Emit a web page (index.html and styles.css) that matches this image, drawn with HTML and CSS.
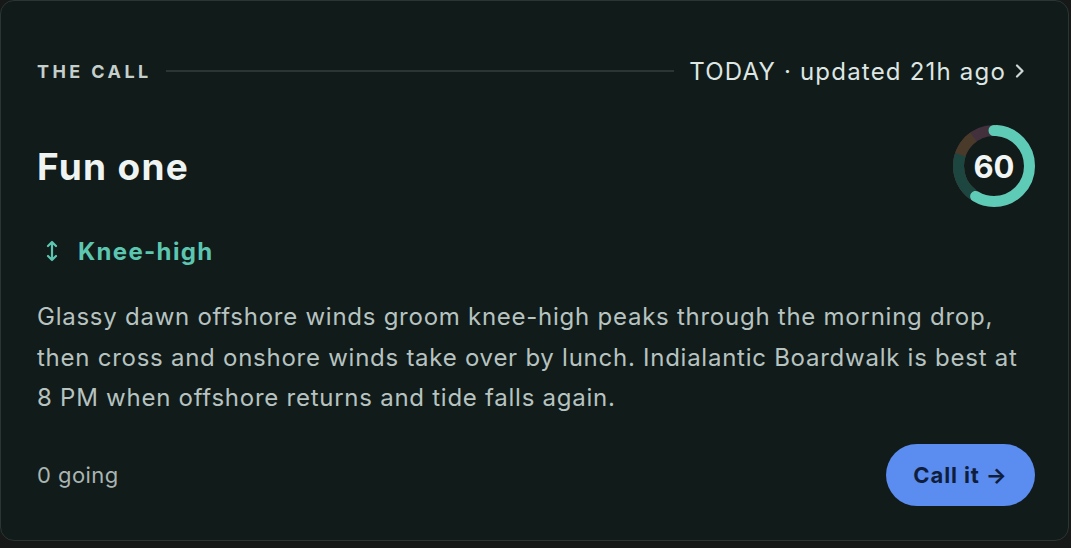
FILE: index.html
```html
<!DOCTYPE html>
<html>
<head>
<meta charset="utf-8">
<link rel="stylesheet" href="styles.css">
</head>
<body>
<div class="card">
  <div class="head">
    <span class="label">THE CALL</span>
    <span class="rule"></span>
    <span class="when">TODAY · updated 21h ago</span>
    <svg class="chev" width="12" height="16" viewBox="0 0 12 16"><path d="M3 2.5 L8.5 8 L3 13.5" fill="none" stroke="#cdd7d4" stroke-width="2.2" stroke-linecap="round" stroke-linejoin="round"/></svg>
  </div>
  <div class="titlerow">
    <h1 class="title">Fun one</h1>
    <div class="ring">
      <svg width="82" height="82" viewBox="0 0 82 82">
        <g transform="rotate(-90 41 41)" fill="none" stroke-width="11">
          <circle cx="41" cy="41" r="35.5" stroke="#43303d" stroke-dasharray="223.05 223.05"/>
          <circle cx="41" cy="41" r="35.5" stroke="#4a3a2a" stroke-dasharray="0 133.8 67 100"/>
          <circle cx="41" cy="41" r="35.5" stroke="#1d4640" stroke-dasharray="0 133.8 44.6 100"/>
          <circle cx="41" cy="41" r="35.5" stroke="#5ecbb6" stroke-linecap="round" stroke-dasharray="0.1 2.5 128 200"/>
        </g>
      </svg>
      <span class="score">60</span>
    </div>
  </div>
  <div class="height">
    <svg class="updown" width="12" height="24" viewBox="0 0 12 24"><path d="M6 3 V21 M2 7 L6 3 L10 7 M2 17 L6 21 L10 17" fill="none" stroke="#5cc6b0" stroke-width="2.2" stroke-linecap="round" stroke-linejoin="round"/></svg>
    <span>Knee-high</span>
  </div>
  <p class="desc">Glassy dawn offshore winds groom knee-high peaks through the morning drop, then cross and onshore winds take over by lunch. Indialantic Boardwalk is best at 8 PM when offshore returns and tide falls again.</p>
  <div class="foot">
    <span class="going">0 going</span>
    <button class="btn">Call it →</button>
  </div>
</div>
</body>
</html>
```
FILE: styles.css
```css
html, body {
  margin: 0;
  padding: 0;
  background: #161918;
  font-family: Inter, "Noto Sans", sans-serif;
}
.card {
  box-sizing: border-box;
  width: 1069px;
  height: 541px;
  padding: 55px 33px 34px 36px;
  background: #111b1a;
  border: 1px solid #2c3533;
  border-radius: 14px;
  display: flex;
  flex-direction: column;
}
.head {
  display: flex;
  align-items: center;
  height: 30px;
}
.label {
  font-size: 18px;
  font-weight: 700;
  letter-spacing: 0.19em;
  color: #c4cfcc;
}
.rule {
  flex: 1;
  height: 2px;
  background: #2b3633;
  margin: 0 15px 0 14px;
}
.when {
  font-size: 24px;
  letter-spacing: 0.05em;
  color: #dde6e3;
}
.chev {
  margin-left: 8px;
  margin-right: 9px;
}
.titlerow {
  margin-top: 39px;
  display: flex;
  align-items: center;
  justify-content: space-between;
}
.title {
  margin: 0;
  font-size: 37px;
  font-weight: 700;
  color: #eef4f2;
  letter-spacing: 0.035em;
}
.ring {
  position: relative;
  width: 82px;
  height: 82px;
}
.ring svg { display: block; }
.score {
  position: absolute;
  inset: 0;
  display: flex;
  align-items: center;
  justify-content: center;
  font-size: 31px;
  font-weight: 700;
  color: #f1f5f4;
}
.height {
  margin-top: 29px;
  display: flex;
  align-items: center;
  gap: 20px;
  padding-left: 9px;
  height: 30px;
  font-size: 24px;
  font-weight: 700;
  letter-spacing: 0.055em;
  color: #5cc6b0;
}
.desc {
  margin: 31px -4px 0 0;
  font-size: 24px;
  line-height: 40.5px;
  letter-spacing: 0.031em;
  color: #b7c3c0;
}
.foot {
  margin-top: auto;
  display: flex;
  align-items: center;
  justify-content: space-between;
}
.going {
  font-size: 22px;
  letter-spacing: 0.02em;
  color: #a9b5b2;
}
.btn {
  width: 149px;
  height: 62px;
  border: none;
  border-radius: 31px;
  background: #5b8cef;
  color: #0f1e3c;
  font-family: Inter, "Noto Sans", sans-serif;
  font-size: 22px;
  font-weight: 700;
  letter-spacing: 0.04em;
  cursor: pointer;
}
```
